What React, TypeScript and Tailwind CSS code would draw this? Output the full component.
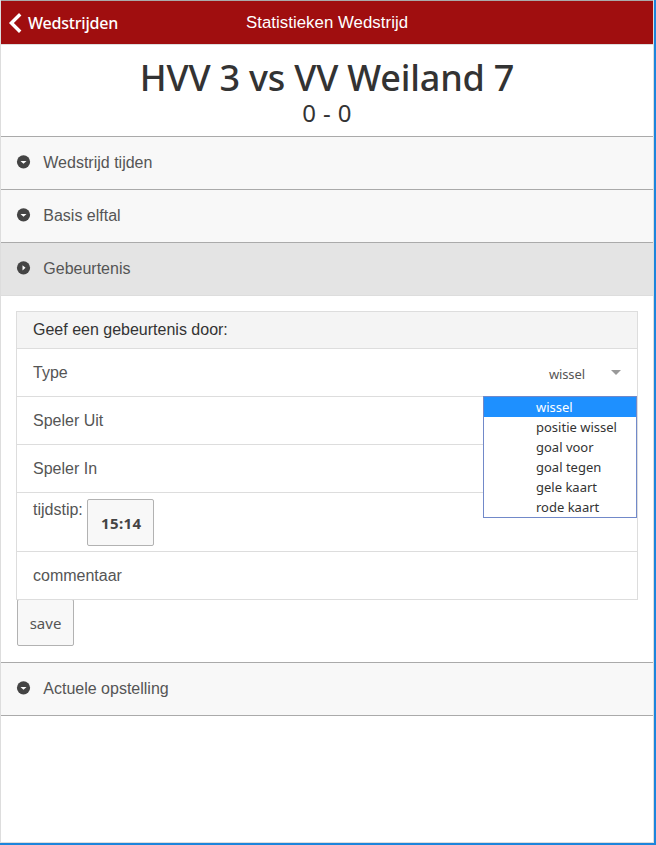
import type { ReactNode } from "react";

const arial = "font-['Liberation_Sans',Arial,sans-serif]";
const segoe = "font-['Noto_Sans','Open_Sans',sans-serif]";

function Marker({ active }: { active?: boolean }) {
  return (
    <svg className="-mt-[2px] h-[14px] w-[15px] shrink-0" viewBox="0 0 15 14">
      <circle cx="7.5" cy="6.8" r="6.6" fill="#444" />
      <path d={active ? "M6.5 4.2L9.5 6.8L6.5 9.4Z" : "M4.5 6H10.5L7.5 8.8Z"} fill="#fff" />
    </svg>
  );
}

function Section({ title, active, last }: { title: string; active?: boolean; last?: boolean }) {
  return (
    <div
      className={`flex items-center border-t border-[#aaa] pl-[15px] ${
        active ? "bg-[#e4e4e4]" : "bg-[#f8f8f8]"
      } ${last ? "h-[54px] border-b" : "h-[53px]"}`}
    >
      <Marker active={active} />
      <span className={`${arial} ml-[12.3px] text-[16px] leading-[20px] text-[#555]`}>{title}</span>
    </div>
  );
}

function Row({ children }: { children: ReactNode }) {
  return (
    <div className="flex h-[48px] items-center justify-between border-t border-[#ddd] px-4 text-[16px] leading-[20px] text-[#555]">
      {children}
    </div>
  );
}

const options = ["wissel", "positie wissel", "goal voor", "goal tegen", "gele kaart", "rode kaart"];

export default function App() {
  return (
    <div className={`h-[845px] w-[656px] border-r-2 border-b-2 border-[#1c85dc] bg-white ${segoe}`}>
      <div className="flex h-[843px] flex-col border-x border-b border-[#ddd]">
        <header className="relative flex h-[45px] items-center justify-center border-t border-b border-t-[#aaa] border-b-[#ddd] bg-[#a00e0f] text-white">
          <div className="absolute top-[11px] left-[7px] flex items-center">
            <svg className="h-[22px] w-[14px]" viewBox="0 0 14 22">
              <path d="M12.2 2.3L3.4 11L12.2 19.7" fill="none" stroke="#fff" strokeWidth="3.4" />
            </svg>
            <span className="ml-[6px] text-[16px] leading-[22px] font-medium tracking-[-0.2px]">Wedstrijden</span>
          </div>
          <h1 className={`${arial} text-[16.8px] leading-[20px] tracking-[0.05px]`}>Statistieken Wedstrijd</h1>
        </header>

        <div className="h-[91px] pt-[12px] text-center text-[#333]">
          <h2 className="text-[36px] leading-[42px] font-medium tracking-[-0.2px]">HVV 3 vs VV Weiland 7</h2>
          <p className="mt-[1px] text-[24px] leading-[26px] tracking-[0.4px]">0 - 0</p>
        </div>

        <Section title="Wedstrijd tijden" />
        <Section title="Basis elftal" />
        <Section title="Gebeurtenis" active />

        <main className="h-[367px] border-t border-[#ddd] px-[15px] pt-[15px]">
          <div className={`${arial} relative w-[622px] border border-[#ddd]`}>
            <div className="h-[36px] bg-[#f4f4f4] px-4 text-[16px] leading-[36px] text-[#333]">
              Geef een gebeurtenis door:
            </div>
            <div className="relative">
              <Row>
                <span>Type</span>
                <span className={`${segoe} flex items-center text-[13px]`}>
                  <span className="mt-[3px] tracking-[-0.1px]">wissel</span>
                  <span className="ml-[26px] border-x-[5px] border-t-[5px] border-x-transparent border-t-[#999]" />
                </span>
              </Row>
              <ul className={`${segoe} absolute top-[48px] right-0 z-10 w-[154px] border border-[#7189c9] bg-white text-[13px] leading-[20px] text-[#333]`}>
                {options.map((o, i) => (
                  <li key={o} className={`h-[20px] pl-[52px] ${i === 0 ? "bg-[#1e90ff] text-white" : ""}`}>
                    {o}
                  </li>
                ))}
              </ul>
            </div>
            <Row>Speler Uit</Row>
            <Row>Speler In</Row>
            <div className="flex h-[59px] items-start border-t border-[#ddd] pt-[6px] pl-4 text-[16px] text-[#555]">
              <span className="mt-px leading-[20px]">tijdstip:</span>
              <button className={`${segoe} ml-[4px] h-[47px] w-[67px] rounded-[2px] border border-[#b2b2b2] bg-[#f8f8f8] pt-[2px] pl-[2px] text-[15px] font-bold tracking-[0.4px] text-[#444]`}>
                15:14
              </button>
            </div>
            <Row>commentaar</Row>
          </div>
          <button className={`${segoe} -mt-px ml-px block h-[47px] w-[57px] rounded-[2px] border border-[#b2b2b2] bg-[#f8f8f8] pt-[2px] text-[15px] text-[#555]`}>
            save
          </button>
        </main>

        <Section title="Actuele opstelling" last />
      </div>
    </div>
  );
}
